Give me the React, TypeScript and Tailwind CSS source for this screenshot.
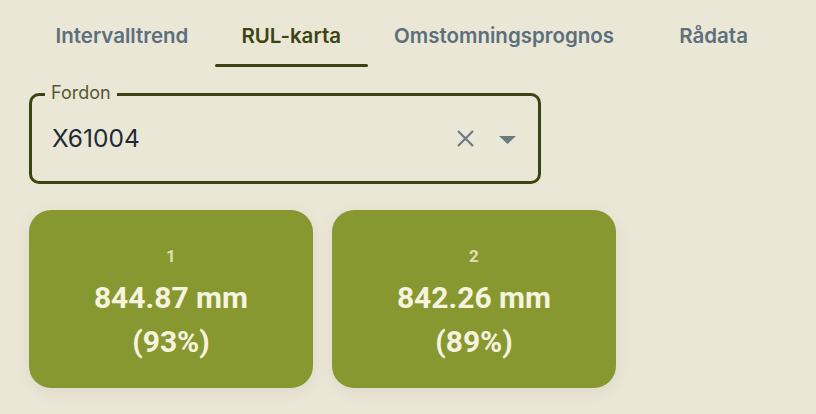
import React from 'react';

const tabs = ['Intervalltrend', 'RUL-karta', 'Omstomningsprognos', 'Rådata'];

const cards = [
  { id: '1', value: '844.87 mm', pct: '(93%)' },
  { id: '2', value: '842.26 mm', pct: '(89%)' },
];

export default function App() {
  return (
    <div className="min-h-screen w-full bg-[#ebe7d7] font-['Inter','Roboto',sans-serif]">
      {/* tabs */}
      <div className="flex pl-[29px] h-[68px]">
        {tabs.map((t, i) => {
          const active = i === 1;
          return (
            <div
              key={t}
              className={
                'relative flex min-w-[146px] items-center justify-center px-[26.5px] pt-[4px] text-[20.5px] font-semibold ' +
                (active ? 'text-[#3c4511]' : 'text-[#5c6f7b]')
              }
            >
              {t}
              {active && <div className="absolute bottom-[1px] left-0 right-0 h-[3px] rounded-full bg-[#3c4511]" />}
            </div>
          );
        })}
      </div>

      {/* select */}
      <div className="pl-[29px] pt-[25px]">
        <div className="relative flex h-[91px] w-[512px] items-center rounded-[10px] border-[3px] border-[#3c4511] pl-[20px] pr-[22px]">
          <span className="absolute -top-[14px] left-[13px] bg-[#ebe7d7] px-[6px] text-[18px] leading-[22px] text-[#55592f]">
            Fordon
          </span>
          <span className="flex-1 text-[24.5px] text-[#1d2a35]">X61004</span>
          <svg width="19" height="19" viewBox="0 0 19 19" className="mr-[24px] stroke-[#6b7a83]" strokeWidth="2.2">
            <path d="M2 2 17 17M17 2 2 17" />
          </svg>
          <svg width="17" height="8" viewBox="0 0 17 8" className="mt-[2px] fill-[#6b7a83]">
            <path d="M0 0h17L8.5 8z" />
          </svg>
        </div>
      </div>

      {/* cards */}
      <div className="flex gap-[19px] pl-[29px] pt-[26px]">
        {cards.map((c) => (
          <div
            key={c.id}
            className="flex h-[178px] w-[284px] flex-col items-center justify-center rounded-[22px] bg-[#889831] pt-[7px] font-['Roboto',sans-serif] font-bold text-[#f6f3df] shadow-[0_4px_14px_rgba(120,110,70,0.12)]"
          >
            <div className="text-[17px] leading-[20px] text-[#e0dfb2]">{c.id}</div>
            <div className="mt-[15px] text-[30px] leading-[34px]">{c.value}</div>
            <div className="mt-[10px] text-[30px] leading-[34px]">{c.pct}</div>
          </div>
        ))}
      </div>
    </div>
  );
}
